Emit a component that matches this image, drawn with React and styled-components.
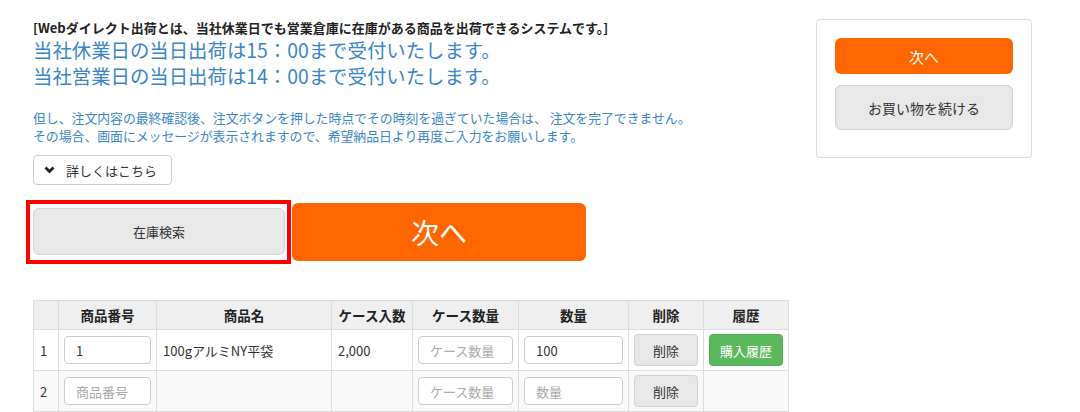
import styled, { createGlobalStyle } from "styled-components";

/* Global ---------------------------*/
const GlobalStyle = createGlobalStyle`
    body {
        margin: 0;
        background: #ffffff;
        font-family: "Noto Sans CJK JP", "Liberation Sans", sans-serif;
        color: #333333;
    }
`;

const rows = [
    { no: 1, code: "1", name: "100gアルミNY平袋", perCase: "2,000", qty: "100", history: true },
    { no: 2, code: "", name: "", perCase: "", qty: "", history: false },
];

const Chevron = () => (
    <svg width="11" height="8" viewBox="0 0 11 8">
        <path d="M1.5 1.5 L5.5 5.5 L9.5 1.5" fill="none" stroke="#222" strokeWidth="2.8" />
    </svg>
);

const App = () => {
    return (
        <>
            <GlobalStyle />
            <PageStyled>
                <MainColumn>
                    <Lead>
                        [Webダイレクト出荷とは、当社休業日でも営業倉庫に在庫がある商品を出荷できるシステムです。]
                    </Lead>
                    <BigNotice>
                        当社休業日の当日出荷は15：00まで受付いたします。
                        <br />
                        当社営業日の当日出荷は14：00まで受付いたします。
                    </BigNotice>
                    <SmallNotice>
                        但し、注文内容の最終確認後、注文ボタンを押した時点でその時刻を過ぎていた場合は、 注文を完了できません。
                        <br />
                        その場合、画面にメッセージが表示されますので、希望納品日より再度ご入力をお願いします。
                    </SmallNotice>
                    <DetailButton>
                        <Chevron />
                        詳しくはこちら
                    </DetailButton>

                    <ActionRow>
                        <Highlight>
                            <GrayButton $w="252px" $h="47px">在庫検索</GrayButton>
                        </Highlight>
                        <OrangeButton $w="294px" $h="58px" $size="28px">
                            次へ
                        </OrangeButton>
                    </ActionRow>

                    <Table>
                        <colgroup>
                            <col style={{ width: 25 }} />
                            <col style={{ width: 98 }} />
                            <col style={{ width: 175 }} />
                            <col style={{ width: 81 }} />
                            <col style={{ width: 106 }} />
                            <col style={{ width: 110 }} />
                            <col style={{ width: 75 }} />
                            <col style={{ width: 85 }} />
                        </colgroup>
                        <thead>
                            <tr>
                                <th></th>
                                <th>商品番号</th>
                                <th>商品名</th>
                                <th>ケース入数</th>
                                <th>ケース数量</th>
                                <th>数量</th>
                                <th>削除</th>
                                <th>履歴</th>
                            </tr>
                        </thead>
                        <tbody>
                            {rows.map((r) => (
                                <Row key={r.no} $striped={r.no % 2 === 0}>
                                    <td>{r.no}</td>
                                    <InputCell>
                                        <Field defaultValue={r.code} placeholder="商品番号" />
                                    </InputCell>
                                    <td>{r.name}</td>
                                    <td>{r.perCase}</td>
                                    <InputCell>
                                        <Field placeholder="ケース数量" />
                                    </InputCell>
                                    <InputCell>
                                        <Field defaultValue={r.qty} placeholder="数量" />
                                    </InputCell>
                                    <InputCell>
                                        <SmallButton>削除</SmallButton>
                                    </InputCell>
                                    <InputCell>
                                        {r.history && <HistoryButton>購入履歴</HistoryButton>}
                                    </InputCell>
                                </Row>
                            ))}
                        </tbody>
                    </Table>
                </MainColumn>

                <SidePanel>
                    <OrangeButton $w="100%" $h="36px" $size="15px">
                        次へ
                    </OrangeButton>
                    <GrayButton $w="100%" $h="45px" $size="14px">
                        お買い物を続ける
                    </GrayButton>
                </SidePanel>
            </PageStyled>
        </>
    );
};

export default App;

/* Styles ---------------------------*/
const PageStyled = styled.div`
    display: flex;
    align-items: flex-start;
    gap: 28px;
    padding: 19px 0 0 33px;
    height: 412px;
    box-sizing: border-box;
    overflow: hidden;
`;

const MainColumn = styled.div`
    width: 755px;
    display: flex;
    flex-direction: column;
    align-items: flex-start;
`;

const Lead = styled.div`
    font-size: 13px;
    line-height: 18px;
    font-weight: bold;
    color: #222222;
    white-space: nowrap;
`;

const BigNotice = styled.div`
    font-size: 19.4px;
    line-height: 26px;
    color: #3a86c6;
    white-space: nowrap;
`;

const SmallNotice = styled.div`
    margin-top: 20px;
    font-size: 12.85px;
    line-height: 18px;
    color: #3a86c6;
    white-space: nowrap;
`;

const DetailButton = styled.button`
    margin-top: 10px;
    width: 139px;
    height: 30px;
    display: flex;
    align-items: center;
    gap: 11px;
    padding: 0 0 0 10px;
    background: #ffffff;
    border: 1px solid #cccccc;
    border-radius: 4px;
    font-family: inherit;
    font-size: 13px;
    color: #333333;
`;

const ActionRow = styled.div`
    margin: 15px 0 0 -7px;
    display: flex;
    align-items: center;
    gap: 1px;
`;

const Highlight = styled.div`
    border: 4px solid #ff0000;
    padding: 4px 2px 5px 3px;
`;

const GrayButton = styled.button`
    width: ${(p) => p.$w};
    height: ${(p) => p.$h};
    background: #e8e8e8;
    border: 1px solid #d2d2d2;
    border-radius: 6px;
    font-family: inherit;
    font-size: ${(p) => p.$size || "13px"};
    color: #333333;
    box-sizing: border-box;
`;

const OrangeButton = styled.button`
    width: ${(p) => p.$w};
    height: ${(p) => p.$h};
    background: #ff6600;
    border: none;
    border-radius: 6px;
    font-family: inherit;
    font-size: ${(p) => p.$size};
    color: #ffffff;
`;

const Table = styled.table`
    margin-top: 36px;
    width: 755px;
    table-layout: fixed;
    border-collapse: collapse;
    font-size: 13px;
    color: #333333;

    th,
    td {
        border: 1px solid #dddddd;
        padding: 0 6px;
        text-align: left;
        white-space: nowrap;
    }

    th {
        height: 28px;
        background: #efefef;
        text-align: center;
        font-weight: bold;
        font-size: 13.5px;
        color: #222222;
    }

    td {
        height: 40px;
    }
`;

const Row = styled.tr`
    background: ${(p) => (p.$striped ? "#f9f9f9" : "#ffffff")};
`;

const InputCell = styled.td`
    && {
        padding: 0 5px;
    }
`;

const Field = styled.input`
    width: 100%;
    height: 28px;
    box-sizing: border-box;
    padding: 0 11px;
    border: 1px solid #cccccc;
    border-radius: 4px;
    background: #ffffff;
    font-family: inherit;
    font-size: 13px;
    color: #333333;

    &::placeholder {
        color: #aaaaaa;
    }
`;

const SmallButton = styled.button`
    width: 100%;
    height: 32px;
    background: #e8e8e8;
    border: 1px solid #d2d2d2;
    border-radius: 4px;
    font-family: inherit;
    font-size: 13px;
    color: #333333;
`;

const HistoryButton = styled.button`
    width: 100%;
    height: 32px;
    background: #5cb85c;
    border: 1px solid #4cae4c;
    border-radius: 4px;
    font-family: inherit;
    font-size: 13px;
    color: #ffffff;
`;

const SidePanel = styled.div`
    width: 216px;
    box-sizing: border-box;
    padding: 18px 18px 27px;
    border: 1px solid #dddddd;
    border-radius: 4px;
    display: flex;
    flex-direction: column;
    gap: 11px;
`;
